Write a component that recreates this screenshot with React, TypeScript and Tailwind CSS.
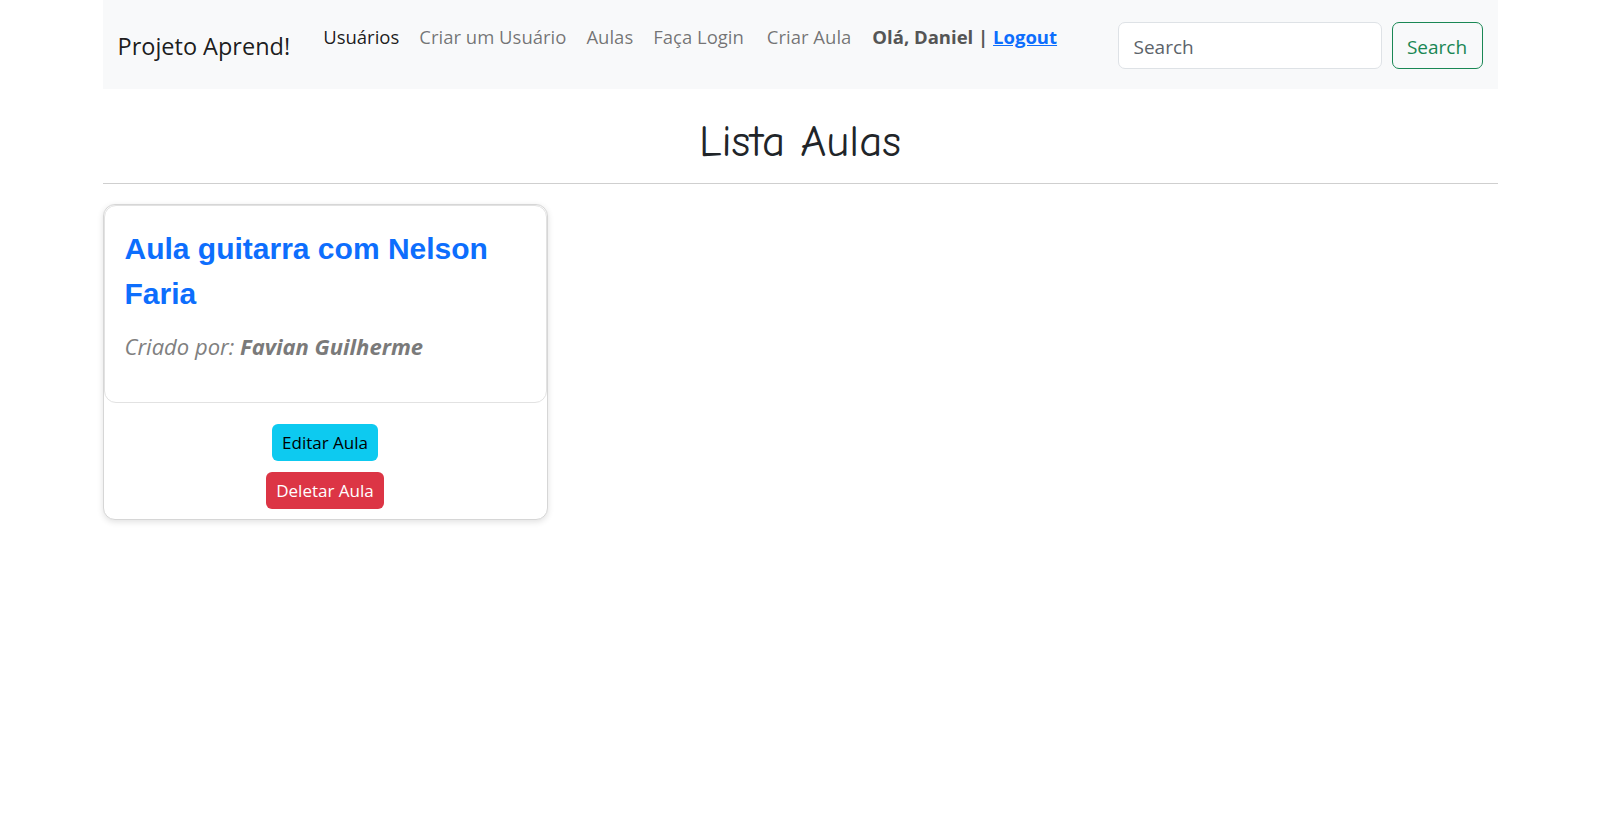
const navLinks = [
  { label: "Usuários", active: true },
  { label: "Criar um Usuário", active: false },
  { label: "Aulas", active: false },
  { label: "Faça Login", active: false },
  { label: "Criar Aula", active: false },
];

function Navbar() {
  return (
    <nav className="flex h-[89px] items-center whitespace-nowrap bg-[#f8f9fa] pl-[15px] pr-[15px]">
      <a className="mt-[4px] shrink-0 text-[23.5px] leading-[37px] text-black/90">Projeto Aprend!</a>
      <ul className="ml-[23px] flex shrink-0 self-start pt-[22px]">
        {navLinks.map((link, i) => (
          <li key={link.label}>
            <a
              className={`block px-[10px] text-[18.5px] leading-[30px] ${
                link.active ? "text-black/90" : "text-black/55"
              } ${i === 3 ? "pr-[13px]" : ""}`}
            >
              {link.label}
            </a>
          </li>
        ))}
        <li className="pr-[10px] pl-[11px] text-[18.5px] leading-[30px] font-bold text-[#555]">
          Olá, Daniel |{" "}
          <a className="text-[#0d6efd] underline">Logout</a>
        </li>
      </ul>
      <form className="mt-[2px] ml-auto flex shrink-0 items-center gap-[10px]">
        <input
          type="search"
          placeholder="Search"
          className="h-[47px] w-[264px] rounded-[7px] border border-[#dee2e6] bg-white px-[15px] pt-[2px] text-[19px] text-[#212529] outline-none placeholder:text-[#5c636a]"
        />
        <button
          type="button"
          className="h-[47px] w-[91px] rounded-[7px] border border-[#198754] pt-[3px] text-[19px] text-[#198754]"
        >
          Search
        </button>
      </form>
    </nav>
  );
}

function AulaCard() {
  return (
    <div className="w-[445px] rounded-[12px] border border-[#d6d6d6] bg-white shadow-[0_2px_6px_rgba(0,0,0,0.12)]">
      <div className="rounded-[12px] border border-[#e2e2e2] px-5 pt-[20px] pb-[20px]">
        <h3 className="font-['Liberation_Sans',Arial,sans-serif] text-[30px] leading-[45px] font-bold text-[#0d6efd]">
          Aula guitarra com Nelson Faria
        </h3>
        <p className="mt-[14px] mb-[19px] text-[22px] leading-[33px] text-[#808080] italic">
          Criado por: <b className="font-bold text-[#7a7a7a]">Favian Guilherme</b>
        </p>
      </div>
      <div className="flex flex-col items-center gap-[11px] pt-[21px] pb-[10px]">
        <button className="h-[37px] rounded-[6px] bg-[#0dcaf0] px-[10px] text-[17px] text-black">
          Editar Aula
        </button>
        <button className="h-[37px] rounded-[6px] bg-[#dc3545] px-[10px] text-[17px] text-white">
          Deletar Aula
        </button>
      </div>
    </div>
  );
}

export default function App() {
  return (
    <div className="min-h-screen bg-white font-['Open_Sans','Noto_Sans',sans-serif] text-[#212529]">
      <div className="mx-auto w-[1395px]">
        <Navbar />

        {/* Title */}
        <h1 className="pt-[26px] pb-[15px] text-center font-['Comic_Sans_MS','Comic_Neue',cursive] text-[45px] leading-[53px]">
          Lista Aulas
        </h1>
        <hr className="border-t border-[#cfcfcf]" />

        <div className="mt-[20px]">
          <AulaCard />
        </div>
      </div>
    </div>
  );
}
